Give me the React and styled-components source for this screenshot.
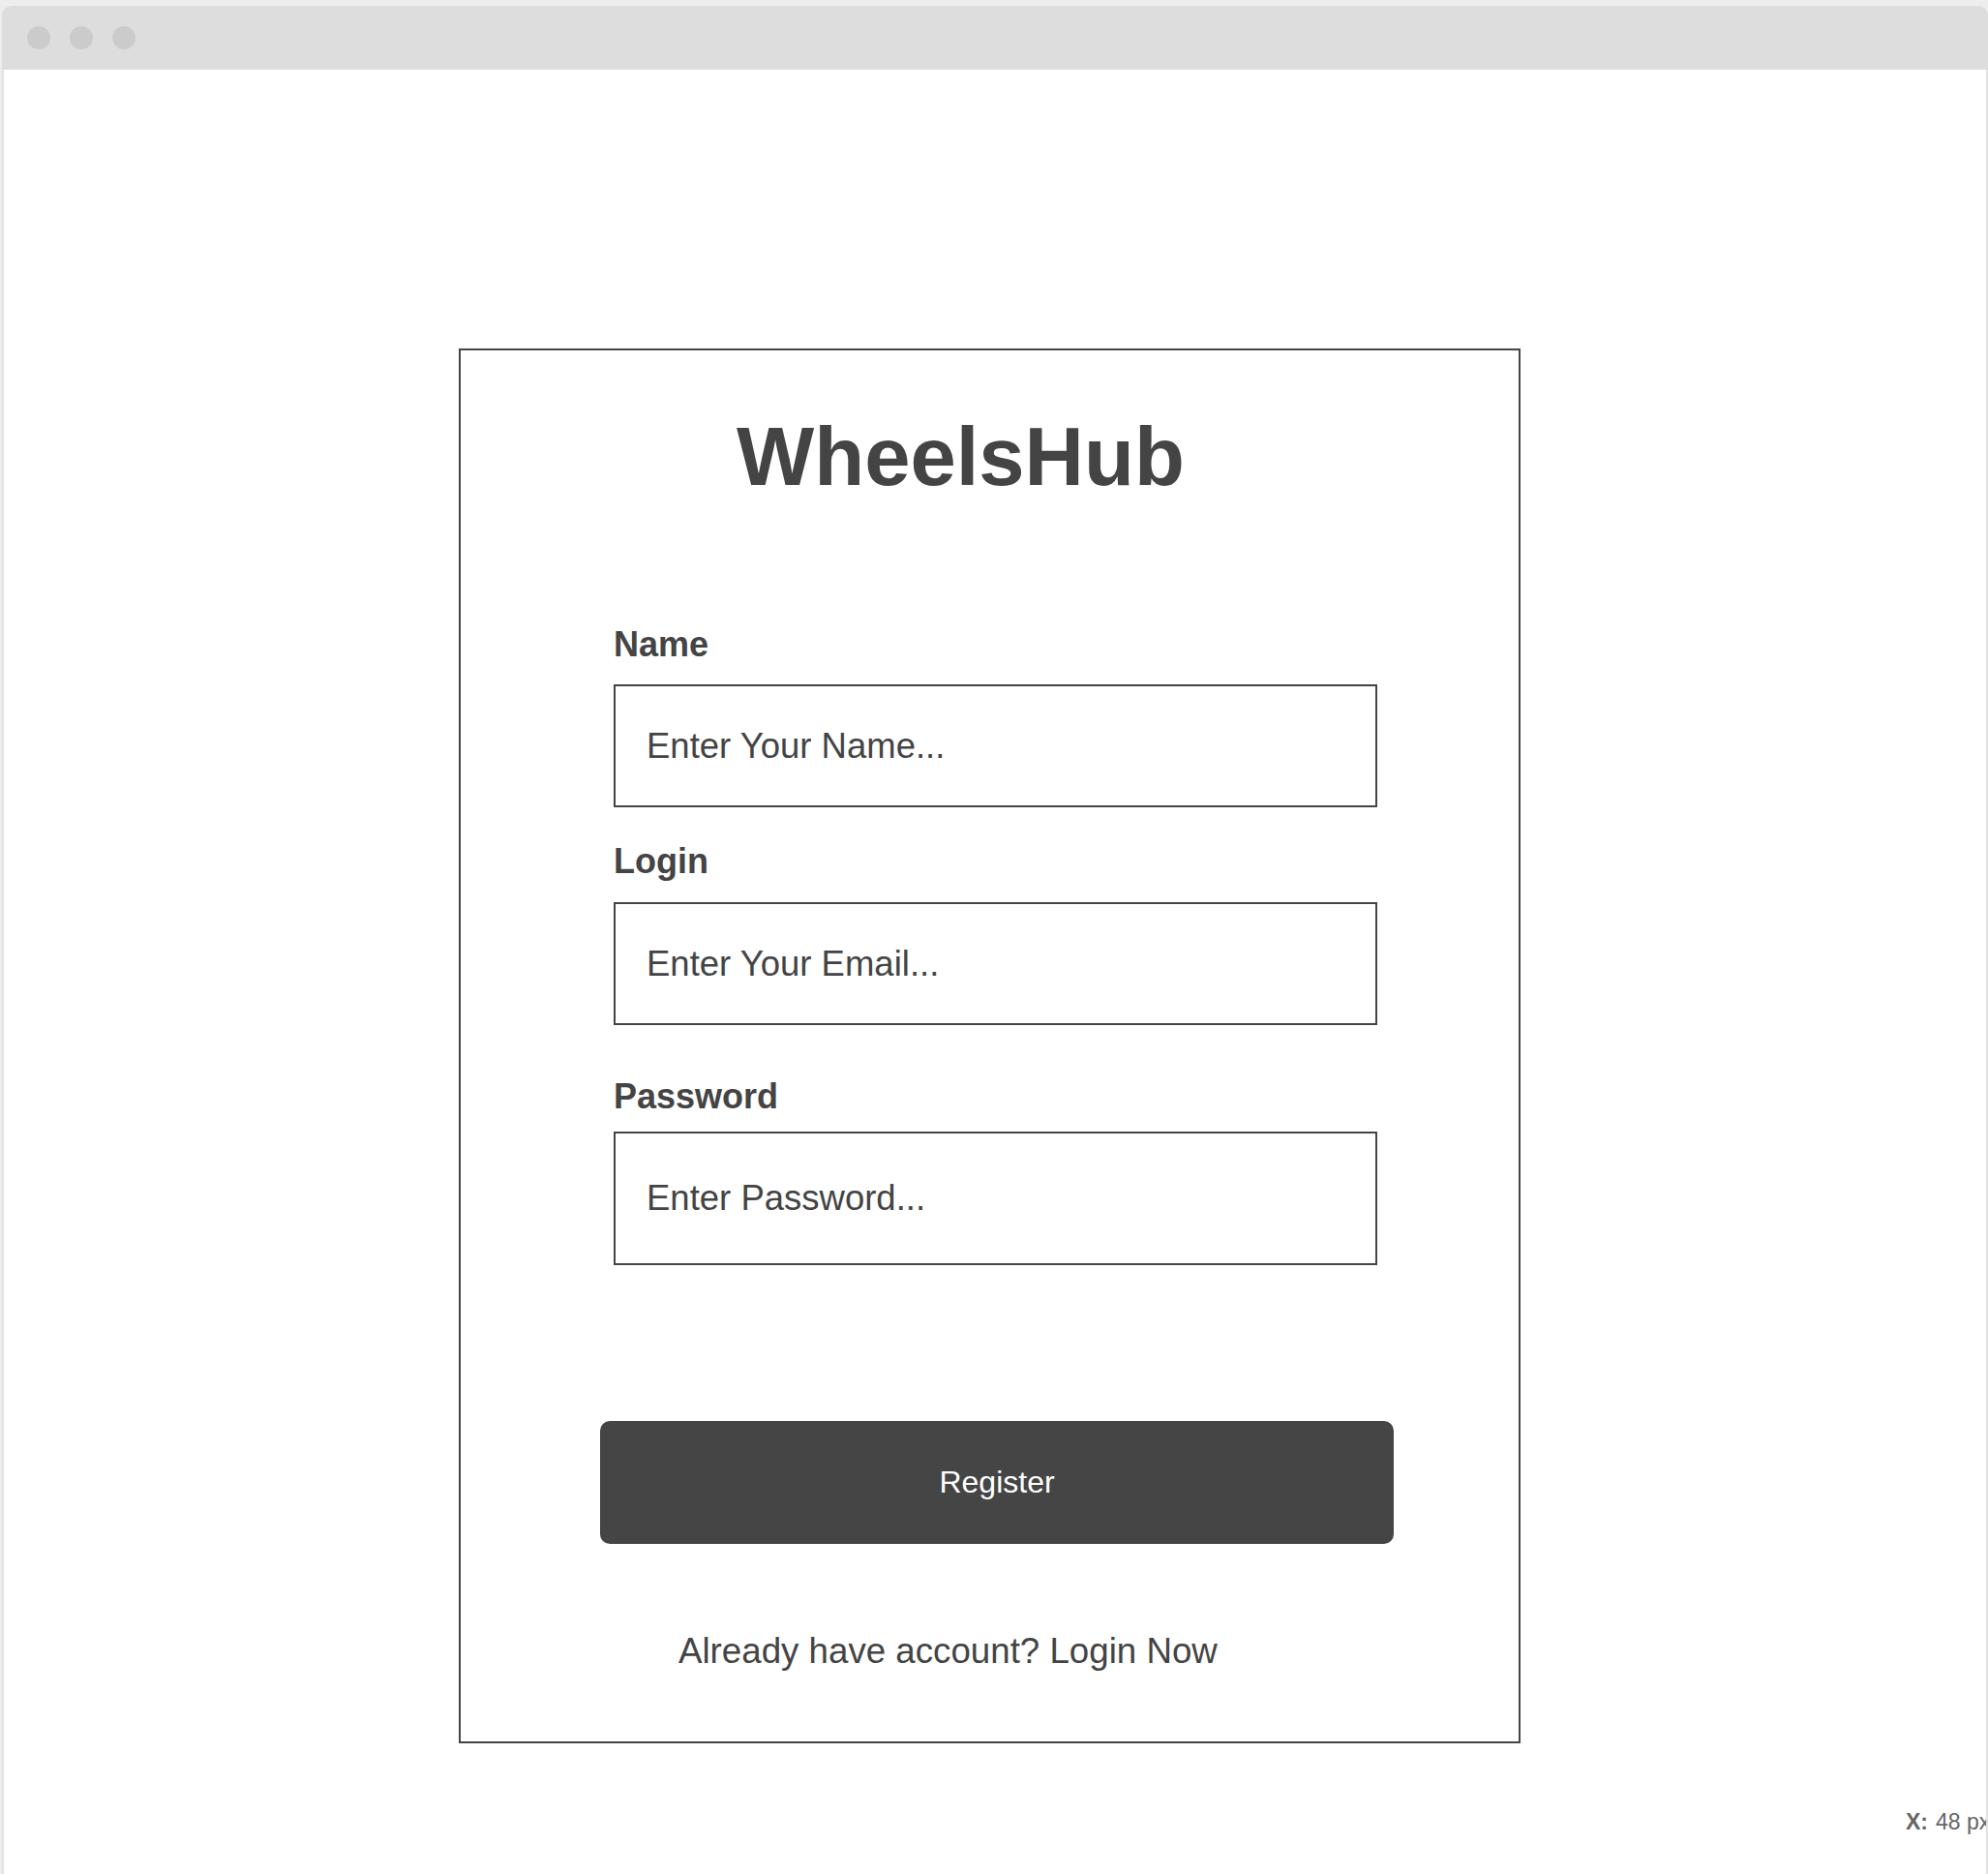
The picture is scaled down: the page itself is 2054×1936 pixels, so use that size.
import React from 'react'
import styled, { createGlobalStyle } from 'styled-components'

const GlobalStyle = createGlobalStyle`
   html, body {
      margin: 0;
      padding: 0;
      background: #ededed;
      font-family: "Liberation Sans", Arial, sans-serif;
   }
   * {
      box-sizing: border-box;
   }
`

const Window = styled.div`
   margin: 6px 0 0 2px;
   width: 2052px;
   border-radius: 10px 10px 0 0;
   overflow: hidden;
`

const TitleBar = styled.div`
   display: flex;
   align-items: center;
   gap: 20px;
   height: 66px;
   padding-left: 26px;
   background: #dddddd;
`

const Dot = styled.span`
   width: 24px;
   height: 24px;
   border-radius: 50%;
   background: #cbcbcb;
`

const Viewport = styled.div`
   position: relative;
   height: 1864px;
   background: #ffffff;
   border-left: 2px solid #e2e2e2;
   border-right: 2px solid #e2e2e2;
   overflow: hidden;
   padding-top: 288px;
   padding-left: 470px;
`

const Card = styled.div`
   display: flex;
   flex-direction: column;
   width: 1097px;
   height: 1441px;
   border: 2px solid #444444;
   color: #444444;
`

const Title = styled.h1`
   margin: 67px 0 0 285px;
   font-size: 85px;
   line-height: 85px;
   font-weight: 700;
`

const Form = styled.form`
   display: flex;
   flex-direction: column;
   margin: 134px 0 0 158px;
   width: 789px;
`

const Label = styled.label`
   margin-top: ${props => props.gap || 0}px;
   font-size: 36px;
   line-height: 36px;
   font-weight: 700;
`

const Input = styled.input`
   margin-top: ${props => props.gap}px;
   height: ${props => props.tall ? 138 : 127}px;
   padding: 0 0 0 32px;
   border: 2px solid #444444;
   border-radius: 0;
   outline: none;
   background: #ffffff;
   font-family: "Liberation Sans", Arial, sans-serif;
   font-size: 36.5px;
   color: #444444;

   &::placeholder {
      color: #444444;
      opacity: 1;
   }
`

const Button = styled.button`
   margin: 161px 0 0 144px;
   width: 820px;
   height: 127px;
   border: none;
   border-radius: 10px;
   background: #454545;
   color: #ffffff;
   font-family: "Liberation Sans", Arial, sans-serif;
   font-size: 32px;
   cursor: pointer;
`

const Footer = styled.p`
   margin: 93px 0 0 225px;
   font-size: 36.7px;
   line-height: 36px;
`

const Coords = styled.div`
   position: absolute;
   left: 1965px;
   top: 1799px;
   font-family: "Liberation Sans", Arial, sans-serif;
   font-size: 23px;
   line-height: 23px;
   color: #666666;
   white-space: nowrap;

   b {
      margin-right: 8px;
   }
`

export default class App extends React.Component {
    render() {
        return(
      <Window>
              <GlobalStyle />
              <TitleBar>
                 <Dot />
                 <Dot />
                 <Dot />
              </TitleBar>
              <Viewport>
                 <Card>
                    <Title>WheelsHub</Title>
                    <Form onSubmit={e => e.preventDefault()}>
                       <Label>Name</Label>
                       <Input gap={23} placeholder="Enter Your Name..." />
                       <Label gap={38}>Login</Label>
                       <Input gap={24} placeholder="Enter Your Email..." />
                       <Label gap={56}>Password</Label>
                       <Input gap={18} tall type="password" placeholder="Enter Password..." />
                    </Form>
                    <Button>Register</Button>
                    <Footer>Already have account? Login Now</Footer>
                 </Card>
                 <Coords><b>X:</b>48 px</Coords>
              </Viewport>
      </Window>
        )
    }
}
